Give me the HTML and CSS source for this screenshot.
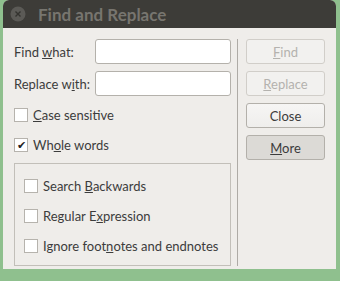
FILE: index.html
```html
<!DOCTYPE html>
<html lang="en">
<head>
    <meta charset="UTF-8">
    <title>Find and Replace</title>
    <link rel="stylesheet" href="styles.css">
</head>
<body>
    <div class="window">
        <div class="titlebar">
            <span class="close-btn">
                <svg width="16" height="16" viewBox="0 0 16 16">
                    <circle cx="8" cy="8" r="7.5" fill="#5b5a56"/>
                    <path d="M5.5 5.5 L10.5 10.5 M10.5 5.5 L5.5 10.5" stroke="#34332f" stroke-width="1.4"/>
                </svg>
            </span>
            <span class="title">Find and Replace</span>
        </div>

        <div class="content">
            <div class="left">
                <div class="form-row">
                    <label>Find <u>w</u>hat:</label>
                    <input type="text" class="field">
                </div>
                <div class="form-row">
                    <label>Replace w<u>i</u>th:</label>
                    <input type="text" class="field">
                </div>

                <div class="check-row">
                    <span class="box"></span>
                    <span><u>C</u>ase sensitive</span>
                </div>
                <div class="check-row">
                    <span class="box checked">&#10004;</span>
                    <span>Wh<u>o</u>le words</span>
                </div>

                <div class="group">
                    <div class="check-row">
                        <span class="box"></span>
                        <span>Search <u>B</u>ackwards</span>
                    </div>
                    <div class="check-row">
                        <span class="box"></span>
                        <span>Regular E<u>x</u>pression</span>
                    </div>
                    <div class="check-row last">
                        <span class="box"></span>
                        <span>Ignore foot<u>n</u>otes and endnotes</span>
                    </div>
                </div>
            </div>

            <div class="separator"></div>

            <div class="buttons">
                <button class="btn" disabled><u>F</u>ind</button>
                <button class="btn" disabled><u>R</u>eplace</button>
                <button class="btn">Close</button>
                <button class="btn btn-more"><u>M</u>ore</button>
            </div>
        </div>
    </div>
</body>
</html>
```

FILE: styles.css
```css
body {
    margin: 0;
    background-color: #8fc08e;
    font-family: Lato, "Open Sans", sans-serif;
    font-size: 13px;
    color: #3c3c3c;
}
.window {
    margin-left: 3px;
    width: 333px;
    height: 269px;
    background-color: #efedea;
    border-radius: 6px 6px 0 0;
    overflow: hidden;
}
.titlebar {
    height: 28px;
    background-color: #3d3c38;
    display: flex;
    align-items: center;
}
.close-btn {
    display: flex;
    margin-left: 7px;
    margin-right: 12px;
}
.title {
    font-weight: bold;
    font-size: 17px;
    color: #77756f;
}
.content {
    display: flex;
    align-items: flex-start;
    padding: 11px 0 0 11px;
}
.left {
    width: 217px;
    white-space: nowrap;
}
.form-row {
    display: flex;
    align-items: center;
    height: 25px;
    margin-bottom: 7px;
}
.form-row label {
    width: 81px;
    flex-shrink: 0;
}
.field {
    width: 136px;
    height: 25px;
    box-sizing: border-box;
    border: 1px solid #b4b1ab;
    border-radius: 3px;
    background: #fff;
    margin: 0;
}
.check-row {
    display: flex;
    align-items: center;
    height: 24px;
    margin-bottom: 6px;
}
.check-row.last {
    margin-bottom: 0;
}
.box {
    width: 14px;
    height: 14px;
    box-sizing: border-box;
    border: 1px solid #b6b3ad;
    background: #fff;
    margin-right: 5px;
    font-size: 11px;
    line-height: 12px;
    text-align: center;
    color: #222;
}
.group {
    border: 1px solid #c2bfb9;
    box-sizing: border-box;
    padding: 10px 0 7px 9px;
}
.separator {
    width: 1px;
    height: 227px;
    background-color: #aeaba6;
    margin-left: 6px;
}
.buttons {
    display: flex;
    flex-direction: column;
    gap: 7px;
    margin-left: 8px;
}
.btn {
    width: 79px;
    height: 25px;
    border: 1px solid #b3b0aa;
    border-radius: 3px;
    background: linear-gradient(#f6f5f4, #efeeec);
    font-family: inherit;
    font-size: 13px;
    color: #3c3c3c;
    padding: 0;
}
.btn:disabled {
    border-color: #d1cec9;
    color: #b4b2ae;
    background: #f2f1ef;
}
.btn-more {
    background: #dcdad6;
}
```
